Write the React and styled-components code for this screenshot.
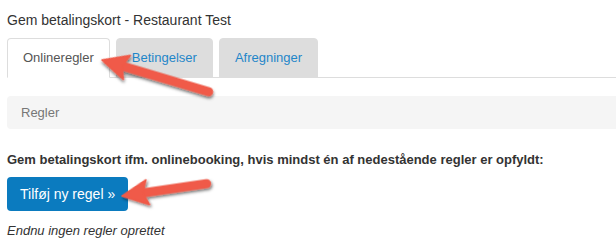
import React from "react";
import styled, { createGlobalStyle } from "styled-components";

const GlobalStyle = createGlobalStyle`
  html, body {
    margin: 0;
    padding: 0;
    background: #fff;
  }
  body {
    font-family: "Liberation Sans", Arial, sans-serif;
    color: #333;
    overflow: hidden;
  }
`;

const tabs = [
  { label: "Onlineregler", active: true },
  { label: "Betingelser" },
  { label: "Afregninger" },
];

function Arrow({ from, to }) {
  const dx = from[0] - to[0];
  const dy = from[1] - to[1];
  const len = Math.sqrt(dx * dx + dy * dy);
  const angle = (Math.atan2(dy, dx) * 180) / Math.PI;
  return (
    <g transform={`translate(${to[0]} ${to[1]}) rotate(${angle})`} filter="url(#arrowShadow)">
      <line x1="20" y1="0" x2={len - 4.5} y2="0" stroke="#f05a48" strokeWidth="9" strokeLinecap="round" />
      <polygon points="0,0 26,-12.5 21,0 26,12.5" fill="#f05a48" strokeLinejoin="round" stroke="#f05a48" strokeWidth="1.5" />
    </g>
  );
}

function App() {
  return (
    <>
      <GlobalStyle />
      <Page>
        <Title>Gem betalingskort - Restaurant Test</Title>
        <TabBar>
          {tabs.map((tab) => (
            <Tab key={tab.label} $active={tab.active}>
              {tab.label}
            </Tab>
          ))}
        </TabBar>
        <Panel>Regler</Panel>
        <Lead>Gem betalingskort ifm. onlinebooking, hvis mindst én af nedestående regler er opfyldt:</Lead>
        <AddButton type="button">Tilføj ny regel »</AddButton>
        <Empty>Endnu ingen regler oprettet</Empty>
        <Overlay width="616" height="252" viewBox="0 0 616 252">
          <defs>
            <filter id="arrowShadow" x="-20%" y="-50%" width="140%" height="200%">
              <feDropShadow dx="1" dy="2" stdDeviation="1.6" floodColor="#000" floodOpacity="0.55" />
            </filter>
          </defs>
          <Arrow from={[213, 93]} to={[102, 60]} />
          <Arrow from={[211, 183]} to={[122, 196]} />
        </Overlay>
      </Page>
    </>
  );
}

export default App;

const Page = styled.div`
  position: relative;
  width: 616px;
  height: 252px;
  box-sizing: border-box;
  padding: 10px 0 0 7px;
  overflow: hidden;
`;

const Title = styled.div`
  font-size: 14px;
  line-height: 20px;
  color: #333;
`;

const TabBar = styled.div`
  display: flex;
  gap: 6px;
  margin-top: 8px;
  margin-right: -20px;
  height: 39px;
  border-bottom: 1px solid #ddd;
`;

const Tab = styled.div`
  box-sizing: border-box;
  height: 40px;
  padding: 0 15px;
  font-size: 13px;
  line-height: 38px;
  border: 1px solid #ddd;
  border-bottom-color: ${(p) => (p.$active ? "#fff" : "#ddd")};
  border-radius: 4px 4px 0 0;
  background: ${(p) => (p.$active ? "#fff" : "#ddd")};
  color: ${(p) => (p.$active ? "#555" : "#1f86c9")};
`;

const Panel = styled.div`
  margin-top: 18px;
  margin-right: -20px;
  height: 33px;
  padding: 0 14px;
  font-size: 13px;
  line-height: 33px;
  color: #777;
  background: #f5f5f5;
  border-radius: 4px;
`;

const Lead = styled.div`
  margin-top: 21px;
  font-size: 13px;
  line-height: 20px;
  font-weight: bold;
  color: #333;
`;

const AddButton = styled.button`
  display: block;
  margin-top: 7px;
  height: 34px;
  padding: 0 13px;
  border: none;
  border-radius: 4px;
  background: #0b7bbf;
  color: #fff;
  font-family: "Liberation Sans", Arial, sans-serif;
  font-size: 14px;
  line-height: 34px;
`;

const Empty = styled.div`
  margin-top: 10px;
  font-size: 13px;
  line-height: 20px;
  font-style: italic;
  color: #333;
`;

const Overlay = styled.svg`
  position: absolute;
  left: 0;
  top: 0;
  pointer-events: none;
`;
